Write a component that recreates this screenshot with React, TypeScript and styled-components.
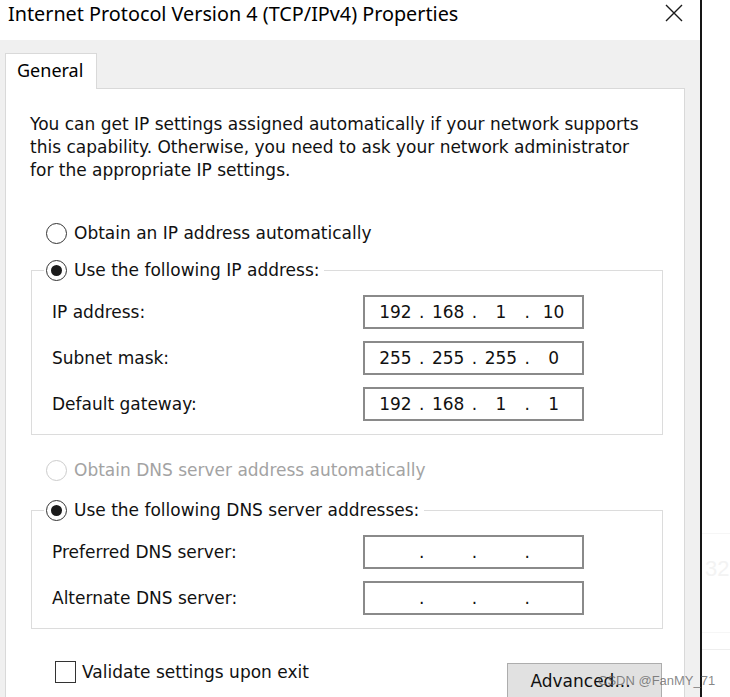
import React from "react";
import styled, { createGlobalStyle } from "styled-components";

const UI_FONT = `"DejaVu Sans", "Liberation Sans", sans-serif`;
const TITLE_FONT = `"Noto Sans", "Open Sans", sans-serif`;

const GlobalStyle = createGlobalStyle`
  html, body { margin: 0; padding: 0; background: #fff; }
  body { width: 730px; height: 697px; overflow: hidden; }
  * { box-sizing: border-box; }
`;

const Screen = styled.div`
  position: relative;
  display: flex;
  width: 730px;
  height: 697px;
  overflow: hidden;
  background: #fff;
`;

const Window = styled.div`
  width: 702px;
  flex: none;
  border-right: 2px solid #151515;
  display: flex;
  flex-direction: column;
`;

const TitleBar = styled.div`
  height: 40px;
  flex: none;
  background: #fff;
  display: flex;
  align-items: flex-start;
  justify-content: space-between;
  padding: 0 17px 0 8px;
`;

const Title = styled.div`
  font-family: ${TITLE_FONT};
  font-size: 19.8px;
  line-height: 27px;
  color: #000;
  white-space: nowrap;
`;

const CloseIcon = styled.svg`
  width: 18px;
  height: 18px;
  margin-top: 4px;
  display: block;
`;

const Body = styled.div`
  flex: 1;
  min-height: 0;
  background: #f0f0f0;
  padding: 13px 15px 0 5px;
  display: flex;
  flex-direction: column;
`;

const TabStrip = styled.div`
  display: flex;
  flex: none;
`;

const Tab = styled.div`
  width: 92px;
  height: 36px;
  border: 1px solid #d9d9d9;
  border-bottom: none;
  background: #fff;
  margin-bottom: -1px;
  position: relative;
  z-index: 1;
  font-family: ${TITLE_FONT};
  font-size: 18px;
  line-height: 33px;
  padding-left: 11px;
  color: #000;
`;

const Panel = styled.div`
  flex: 1;
  background: #fff;
  border: 1px solid #d9d9d9;
  padding: 23px 21px 0 24px;
  display: flex;
  flex-direction: column;
  font-family: ${UI_FONT};
  font-size: 17px;
  color: #000;
`;

const Description = styled.div`
  line-height: 23px;
  padding-top: 1px;
  white-space: nowrap;
  color: #111;
`;

const RadioRow = styled.label<{ $top: number; $disabled?: boolean }>`
  display: flex;
  align-items: center;
  gap: 7px;
  height: 24px;
  margin-top: ${(p) => p.$top}px;
  margin-left: 16px;
  color: ${(p) => (p.$disabled ? "#a3a3a3" : "#111")};
  white-space: nowrap;
`;

const RadioCircle = styled.span<{ $checked?: boolean; $disabled?: boolean }>`
  width: 21px;
  height: 21px;
  flex: none;
  border-radius: 50%;
  border: 1.5px solid ${(p) => (p.$disabled ? "#cccccc" : "#333")};
  background: #fff;
  display: flex;
  align-items: center;
  justify-content: center;
  &::after {
    content: "";
    display: ${(p) => (p.$checked ? "block" : "none")};
    width: 11px;
    height: 11px;
    border-radius: 50%;
    background: #1b1b1b;
  }
`;

const Group = styled.fieldset<{ $top: number }>`
  margin: ${(p) => p.$top}px 0 0 1px;
  border: 1px solid #dcdcdc;
  padding: 13px 20px 13px 20px;
  min-inline-size: 0;
  display: grid;
  grid-template-columns: 311px 221px;
  row-gap: 12px;
  align-items: center;
  color: #111;
`;

const Legend = styled.legend`
  padding: 0 5px 0 2px;
  margin-left: -8px;
  height: 24px;
  display: flex;
  align-items: center;
  gap: 7px;
  white-space: nowrap;
`;

const FieldLabel = styled.div`
  white-space: nowrap;
`;

const IpBox = styled.div`
  height: 34px;
  border: 2px solid #8a8a8a;
  background: #fff;
  display: flex;
  align-items: center;
  padding: 0 6px 0 8px;
`;

const Octet = styled.span`
  width: 45px;
  text-align: center;
`;

const Dot = styled.span`
  width: 8px;
  text-align: center;
`;

const BottomRow = styled.div`
  display: flex;
  justify-content: space-between;
  align-items: flex-start;
  margin-top: 32px;
  margin-right: 1px;
`;

const CheckRow = styled.label`
  display: flex;
  align-items: center;
  gap: 6px;
  margin-left: 25px;
  height: 22px;
  white-space: nowrap;
  color: #111;
`;

const CheckBox = styled.span`
  width: 21px;
  height: 22px;
  border: 1.5px solid #333;
  background: #fff;
  flex: none;
`;

const Button = styled.div`
  margin-top: 2px;
  width: 155px;
  height: 38px;
  border: 1px solid #adadad;
  background: #e1e1e1;
  display: flex;
  align-items: center;
  justify-content: center;
  padding: 0 8px 2px 0;
  color: #111;
`;

const Side = styled.div`
  flex: 1;
  display: flex;
  flex-direction: column;
  padding-top: 533px;
`;

const SideCell = styled.div`
  height: 100px;
  border-top: 1px solid #f6f6f6;
  border-bottom: 1px solid #f6f6f6;
  font-family: "Liberation Sans", Arial, sans-serif;
  font-size: 22px;
  color: #f3f3f3;
  padding: 22px 0 0 3px;
`;

const SideLine = styled.div`
  margin-top: 16px;
  border-top: 1px solid #eeeeee;
`;

const Watermark = styled.div`
  position: absolute;
  left: 598px;
  top: 673px;
  font-family: "Liberation Sans", Arial, sans-serif;
  font-size: 13px;
  color: rgba(95, 95, 95, 0.75);
  white-space: nowrap;
  pointer-events: none;
`;

function Radio({ checked, disabled }: { checked?: boolean; disabled?: boolean }) {
  return <RadioCircle $checked={checked} $disabled={disabled} />;
}

function IpField({ value }: { value: string[] }) {
  return (
    <IpBox>
      <Octet>{value[0]}</Octet>
      <Dot>.</Dot>
      <Octet>{value[1]}</Octet>
      <Dot>.</Dot>
      <Octet>{value[2]}</Octet>
      <Dot>.</Dot>
      <Octet>{value[3]}</Octet>
    </IpBox>
  );
}

export default function App() {
  return (
    <Screen>
      <GlobalStyle />
      <Window>
        <TitleBar>
          <Title>Internet Protocol Version 4 (TCP/IPv4) Properties</Title>
          <CloseIcon viewBox="0 0 18 18">
            <path d="M1 1 L17 17 M17 1 L1 17" stroke="#1a1a1a" strokeWidth="1.4" fill="none" />
          </CloseIcon>
        </TitleBar>
        <Body>
          <TabStrip>
            <Tab>General</Tab>
          </TabStrip>
          <Panel>
            <Description>
              You can get IP settings assigned automatically if your network supports
              <br />
              this capability. Otherwise, you need to ask your network administrator
              <br />
              for the appropriate IP settings.
            </Description>

            <RadioRow $top={39}>
              <Radio />
              Obtain an IP address automatically
            </RadioRow>

            <Group $top={13}>
              <Legend>
                <Radio checked />
                Use the following IP address:
              </Legend>
              <FieldLabel>IP address:</FieldLabel>
              <IpField value={["192", "168", "1", "10"]} />
              <FieldLabel>Subnet mask:</FieldLabel>
              <IpField value={["255", "255", "255", "0"]} />
              <FieldLabel>Default gateway:</FieldLabel>
              <IpField value={["192", "168", "1", "1"]} />
            </Group>

            <RadioRow $top={23} $disabled>
              <Radio disabled />
              Obtain DNS server address automatically
            </RadioRow>

            <Group $top={16}>
              <Legend>
                <Radio checked />
                Use the following DNS server addresses:
              </Legend>
              <FieldLabel>Preferred DNS server:</FieldLabel>
              <IpField value={["", "", "", ""]} />
              <FieldLabel>Alternate DNS server:</FieldLabel>
              <IpField value={["", "", "", ""]} />
            </Group>

            <BottomRow>
              <CheckRow>
                <CheckBox />
                Validate settings upon exit
              </CheckRow>
              <Button>Advanced...</Button>
            </BottomRow>
          </Panel>
        </Body>
      </Window>
      <Side>
        <SideCell>32</SideCell>
        <SideLine />
      </Side>
      <Watermark>CSDN @FanMY_71</Watermark>
    </Screen>
  );
}
